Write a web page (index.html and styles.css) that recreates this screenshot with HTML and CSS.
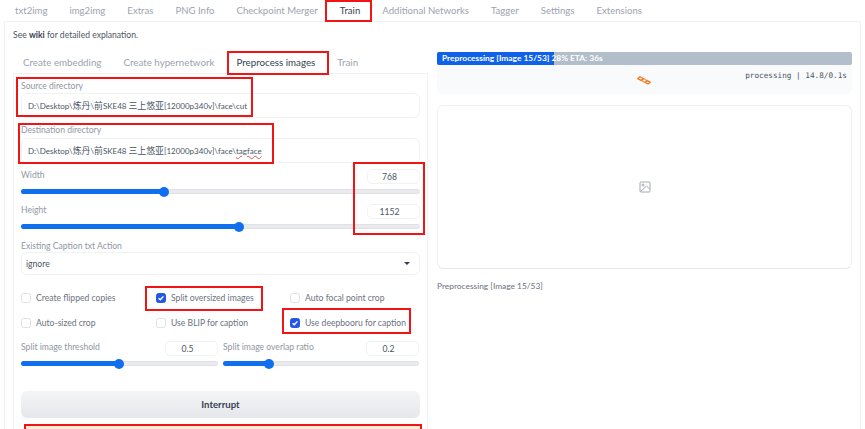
FILE: index.html
```html
<!DOCTYPE html>
<html lang="en">
<head>
<meta charset="utf-8">
<title>Train</title>
<link rel="stylesheet" href="styles.css">
</head>
<body>
<nav class="tabs">
  <span class="tab">txt2img</span><span class="tab">img2img</span><span class="tab">Extras</span><span class="tab">PNG Info</span><span class="tab">Checkpoint Merger</span><span class="tab tab-on">Train</span><span class="tab">Additional Networks</span><span class="tab">Tagger</span><span class="tab">Settings</span><span class="tab">Extensions</span>
</nav>
<main class="panel">
  <p class="see">See <b>wiki</b> for detailed explanation.</p>
  <div class="cols">
    <section class="left">
      <nav class="subtabs">
        <span class="tab">Create embedding</span><span class="tab">Create hypernetwork</span><span class="tab tab-on">Preprocess images</span><span class="tab">Train</span>
      </nav>
      <div class="subpanel">
        <label class="label">Source directory</label>
        <div class="field">D:\Desktop\<span class="cjk">炼丹</span>\<span class="cjk">前</span>SKE48 <span class="cjk">三上悠亚</span>[12000p340v]\face\cut</div>
        <label class="label label-next">Destination directory</label>
        <div class="field field-next">D:\Desktop\<span class="cjk">炼丹</span>\<span class="cjk">前</span>SKE48 <span class="cjk">三上悠亚</span>[12000p340v]\face\<span class="typo">tagface</span></div>

        <div class="slider slider-w">
          <div class="slider-head"><span class="label">Width</span><span class="num">768</span></div>
          <div class="track"><div class="fill" style="width:36%"></div></div>
        </div>
        <div class="slider slider-h">
          <div class="slider-head"><span class="label">Height</span><span class="num">1152</span></div>
          <div class="track"><div class="fill" style="width:55%"></div></div>
        </div>

        <label class="label label-sel">Existing Caption txt Action</label>
        <div class="select"><span>ignore</span><i class="caret"></i></div>

        <div class="checks">
          <div class="check"><i class="box"></i>Create flipped copies</div>
          <div class="check"><i class="box box-on"><svg viewBox="0 0 10 10"><path d="M2.6 5.2 4.3 6.8 7.4 3.4"/></svg></i>Split oversized images</div>
          <div class="check"><i class="box"></i>Auto focal point crop</div>
          <div class="check"><i class="box"></i>Auto-sized crop</div>
          <div class="check"><i class="box"></i>Use BLIP for caption</div>
          <div class="check"><i class="box box-on"><svg viewBox="0 0 10 10"><path d="M2.6 5.2 4.3 6.8 7.4 3.4"/></svg></i>Use deepbooru for caption</div>
        </div>

        <div class="pair">
          <div class="slider">
            <div class="slider-head"><span class="label">Split image threshold</span><span class="num">0.5</span></div>
            <div class="track"><div class="fill" style="width:50%"></div></div>
          </div>
          <div class="slider">
            <div class="slider-head"><span class="label">Split image overlap ratio</span><span class="num">0.2</span></div>
            <div class="track"><div class="fill" style="width:23.5%"></div></div>
          </div>
        </div>

        <button class="interrupt">Interrupt</button>
        <div class="warn"></div>
      </div>
    </section>
    <section class="right">
      <div class="progress">
        <div class="progress-fill"></div>
        <span class="progress-text">Preprocessing [Image 15/53] 28% ETA: 36s</span>
      </div>
      <div class="status">
        <svg class="spinner" viewBox="0 0 14 9"><g fill="none" stroke="#f47b20" stroke-width="1.3"><path d="M0.8 2.6 3 0.8 6.4 2.6 4.2 4.4Z"/><path d="M4.6 4.6 6.8 2.8 10.2 4.6 8 6.4Z" opacity=".75"/><path d="M8.2 6.4 10.4 4.6 13.2 6.2 11 8Z"/></g></svg>
        <span class="timing">processing | 14.8/0.1s</span>
      </div>
      <div class="imagebox">
        <svg class="imgicon" viewBox="0 0 12 12"><rect x="1" y="1" width="10" height="10" rx="1"/><circle cx="4" cy="4" r="1"/><path d="M1.5 10.5 7.5 5 10.8 8"/></svg>
      </div>
      <p class="info">Preprocessing [Image 15/53]</p>
    </section>
  </div>
</main>
<div class="note n-tab"></div>
<div class="note n-pre"></div>
<div class="note n-src"></div>
<div class="note n-dst"></div>
<div class="note n-num"></div>
<div class="note n-split"></div>
<div class="note n-deep"></div>
<div class="note n-bottom"></div>
</body>
</html>
```
FILE: styles.css
```css
* { box-sizing: border-box; }
html, body { margin: 0; height: 429px; overflow: hidden; }
body {
  position: relative;
  width: 865px;
  background: #fff;
  color: #4b5563;
  font-family: "Lato", "Noto Sans CJK SC", sans-serif;
  font-size: 8.6px;
  line-height: 12px;
}
.tabs { display: flex; height: 21px; padding-left: 4px; align-items: center; }
.tab { padding: 0 11px; color: #9ca3af; font-size: 9.6px; white-space: nowrap; }
.tab-on { color: #374151; }
.panel {
  margin-left: 4px;
  width: 857px;
  height: 420px;
  border: 1px solid #f0f1f3;
  border-bottom: 0;
  padding: 7px 8px 0;
}
.see { margin: 0; color: #4b5563; font-size: 8.6px; line-height: 12px; }
.see b { font-weight: 700; color: #374151; }
.cols { display: flex; margin-top: 10px; }
.left { width: 415px; flex: none; }
.subtabs { display: flex; height: 22px; margin-left: -1px; align-items: center; }
.subtabs .tab { font-size: 9.75px; }
.subpanel {
  border: 1px solid #f0f1f3;
  border-bottom: 0;
  height: 360px;
  padding: 6px 7px 0;
}
.label { display: block; color: #9097a3; font-size: 8.6px; line-height: 12px; }
.label-next { margin-top: 6px; }
.field {
  height: 25px;
  margin-top: 1px;
  padding: 0 6px;
  display: flex;
  align-items: center;
  white-space: pre;
  color: #4b5563;
  font-size: 8px;
  border: 1px solid #f1f2f4;
  border-radius: 6px;
}
.field-next { margin-top: 2px; }
.cjk { font-size: 8.9px; }
.typo { text-decoration: underline wavy #e0584c 1px; }
.slider-w { margin-top: 6px; }
.slider-h { margin-top: 10px; }
.slider-head { display: flex; justify-content: space-between; height: 16px; }
.num {
  width: 53px;
  height: 15px;
  padding-right: 8px;
  border: 1px solid #f1f2f4;
  border-radius: 5px;
  text-align: center;
  color: #4b5563;
  font-size: 8.6px;
  line-height: 14px;
}
.track {
  height: 5px;
  margin-top: 4px;
  background: #e9ebee;
  border: 1px solid #dfe1e5;
  border-radius: 3px;
  position: relative;
}
.fill {
  position: relative;
  height: 5px;
  margin: -1px 0 0 -1px;
  background: #0f6fee;
  border-radius: 3px;
}
.fill::after {
  content: "";
  position: absolute;
  right: -5px;
  top: -2.5px;
  width: 10px;
  height: 10px;
  border-radius: 50%;
  background: #0f6fee;
}
.label-sel { margin-top: 11px; }
.select {
  height: 23px;
  padding: 0 9px 0 4px;
  display: flex;
  align-items: center;
  justify-content: space-between;
  border: 1px solid #f1f2f4;
  border-radius: 6px;
  color: #4b5563;
  font-size: 8.6px;
}
.caret { border: 3px solid transparent; border-top: 3.5px solid #374151; border-bottom: 0; }
.checks {
  display: grid;
  grid-template-columns: 135px 134px 1fr;
  grid-auto-rows: 25px;
  margin-top: 10px;
}
.check { display: flex; align-items: center; gap: 5px; color: #6b7280; font-size: 8.6px; white-space: nowrap; }
.box {
  flex: none;
  width: 10px;
  height: 10px;
  border: 1px solid #dfe1e5;
  border-radius: 2.5px;
  background: #fff;
}
.box-on { background: #2457e6; border-color: #2457e6; }
.box svg { display: block; width: 10px; height: 10px; margin: -1px; fill: none; stroke: #fff; stroke-width: 1.4; }
.pair { display: grid; grid-template-columns: 197px 196px; gap: 5px; margin-top: 6px; }
.interrupt {
  display: block;
  width: 399px;
  height: 27px;
  margin-top: 25px;
  border: 0;
  border-radius: 6px;
  background: linear-gradient(#f4f5f6, #e6e7eb);
  color: #374151;
  font: 700 9.6px "Lato", sans-serif;
}
.warn { height: 6px; margin: 7px -2px 0 3px; background: #fdebd6; }
.right { width: 415px; flex: none; margin-left: 9px; margin-top: 1px; }
.progress { position: relative; height: 13px; background: #b2bec9; border-radius: 2px; overflow: hidden; }
.progress-fill { position: absolute; left: 0; top: 0; bottom: 0; width: 28.3%; background: #0f62e8; }
.progress-text {
  position: relative;
  display: block;
  padding-left: 5px;
  color: #fff;
  font-weight: 700;
  font-size: 8.4px;
  line-height: 13px;
  white-space: nowrap;
}
.status {
  position: relative;
  height: 29px;
  background: #f9fafc;
  border-radius: 0 0 6px 6px;
  text-align: right;
  padding: 4px 5px 0;
}
.spinner { position: absolute; left: 200px; top: 11px; width: 14px; height: 9px; }
.timing { font-family: "DejaVu Sans Mono", monospace; font-size: 7.7px; color: #4b5563; }
.imagebox {
  display: flex;
  align-items: center;
  justify-content: center;
  height: 164px;
  margin-top: 11px;
  border: 1px solid #eef0f2;
  border-bottom-color: #e6e8eb;
  border-radius: 6px;
}
.imgicon { width: 12px; height: 12px; fill: none; stroke: #a3a8b0; stroke-width: 1; }
.info { margin: 11px 0 0; color: #6b7280; font-size: 8.4px; }
.note { position: absolute; border: 2px solid #f01414; }
.n-tab { left: 325px; top: 0; width: 47px; height: 22px; }
.n-pre { left: 227px; top: 51px; width: 102px; height: 24px; }
.n-src { left: 16px; top: 77px; width: 237px; height: 40px; }
.n-dst { left: 18px; top: 123px; width: 256px; height: 41px; }
.n-num { left: 353px; top: 162px; width: 72px; height: 73px; }
.n-split { left: 145px; top: 286px; width: 118px; height: 25px; }
.n-deep { left: 282px; top: 308px; width: 129px; height: 26px; }
.n-bottom { left: 24px; top: 424px; width: 398px; height: 20px; }
```
